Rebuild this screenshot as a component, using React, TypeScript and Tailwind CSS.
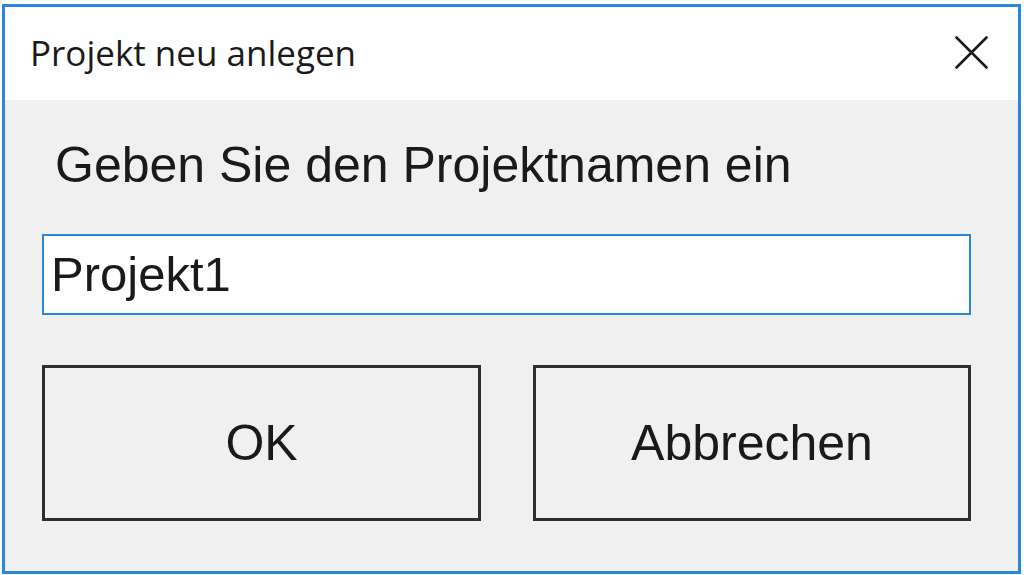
import React from "react";

export default function App() {
  return (
    <div className="w-[1024px] h-[575px] bg-white overflow-hidden">
      <div className="ml-[2px] mt-[4px] w-[1019px] h-[570px] border-[3px] border-[#2b88d8] flex flex-col">
        <div className="h-[93px] bg-white flex items-center justify-between pl-[25px] pr-[30px]">
          <span className="text-[35px] text-[#1a1a1a] leading-none -mt-[2px]" style={{ fontFamily: '"Open Sans", "Noto Sans", sans-serif' }}>
            Projekt neu anlegen
          </span>
          <svg width="33" height="33" viewBox="0 0 33 33" className="-mt-[2px]">
            <path d="M1.5 1.5 L31.5 31.5 M31.5 1.5 L1.5 31.5" stroke="#1a1a1a" strokeWidth="2.6" strokeLinecap="round" />
          </svg>
        </div>
        <div className="flex-1 bg-[#f0f0f0] pl-[37px] flex flex-col" style={{ fontFamily: '"Liberation Sans", Arial, sans-serif' }}>
          <div className="mt-[40px] ml-[13px] text-[50px] leading-none h-[49px] text-[#1a1a1a]">
            Geben Sie den Projektnamen ein
          </div>
          <div className="mt-[45px] w-[929px] h-[81px] border-2 border-[#2b88d8] bg-white flex items-center pl-[7px] text-[49px] leading-none text-[#1a1a1a]">
            Projekt1
          </div>
          <div className="mt-[50px] flex gap-[52px]">
            <button className="w-[439px] h-[156px] border-[3px] border-[#2e2e2e] bg-[#f0f0f0] flex items-center justify-center text-[50px] leading-none text-[#1a1a1a]">
              OK
            </button>
            <button className="w-[438px] h-[156px] border-[3px] border-[#2e2e2e] bg-[#f0f0f0] flex items-center justify-center text-[50px] leading-none text-[#1a1a1a]">
              Abbrechen
            </button>
          </div>
        </div>
      </div>
    </div>
  );
}
